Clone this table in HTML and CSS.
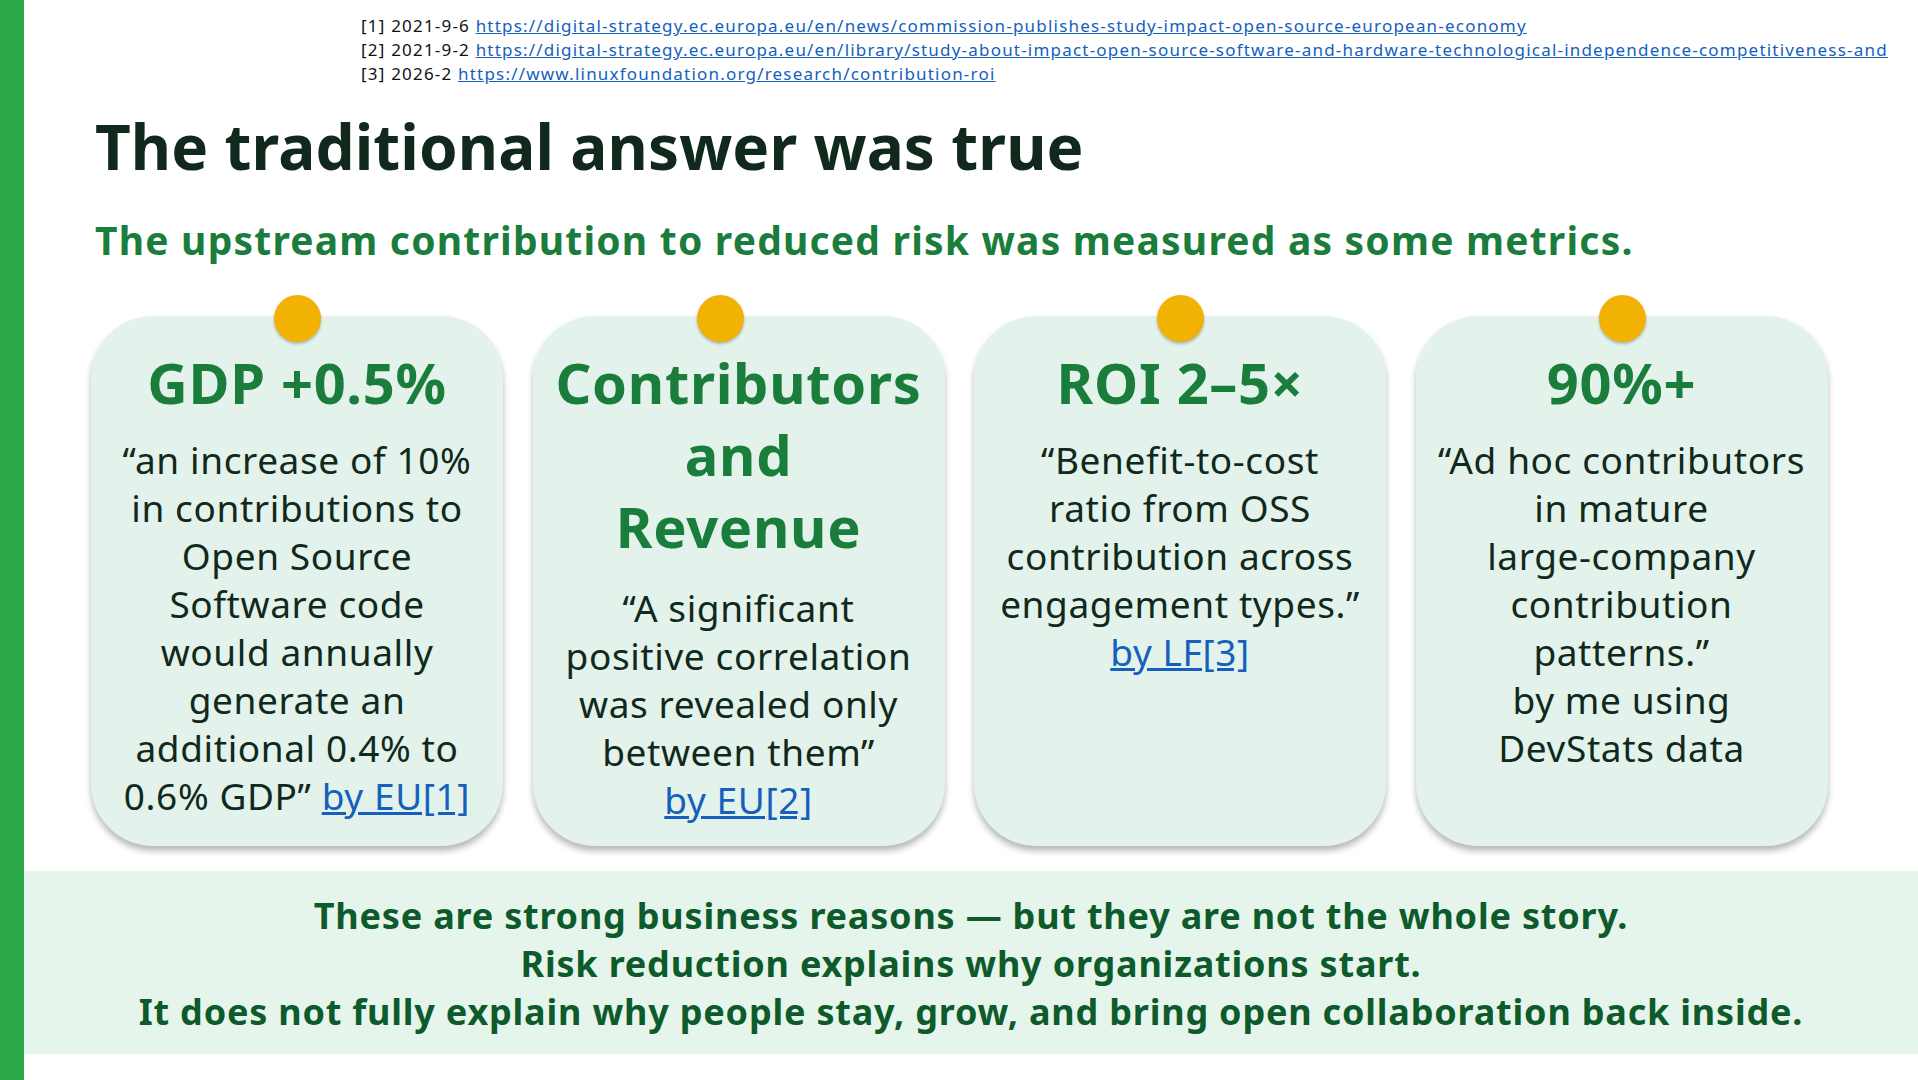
FILE: index.html
```html
<!DOCTYPE html>
<html lang="en">
<head>
<meta charset="utf-8">
<title>The traditional answer was true</title>
<link rel="stylesheet" href="styles.css">
</head>
<body>
<div class="page">
  <div class="bar"></div>
  <main class="main">
    <div class="refs">
      <div>[1] 2021-9-6 <a href="#">https://digital-strategy.ec.europa.eu/en/news/commission-publishes-study-impact-open-source-european-economy</a></div>
      <div>[2] 2021-9-2 <a href="#">https://digital-strategy.ec.europa.eu/en/library/study-about-impact-open-source-software-and-hardware-technological-independence-competitiveness-and</a></div>
      <div>[3] 2026-2 <a href="#">https://www.linuxfoundation.org/research/contribution-roi</a></div>
    </div>
    <h1 class="title">The traditional answer was true</h1>
    <h2 class="subtitle">The upstream contribution to reduced risk was measured as some metrics.</h2>
    <section class="cards">
      <div class="card">
        <span class="pin"></span>
        <h3 class="card-head">GDP +0.5%</h3>
        <p class="card-body">“an increase of 10%<br>in contributions to<br>Open Source<br>Software code<br>would annually<br>generate an<br>additional 0.4% to<br>0.6% GDP” <a href="#">by EU[1]</a></p>
      </div>
      <div class="card">
        <span class="pin pin-left"></span>
        <h3 class="card-head">Contributors<br>and<br>Revenue</h3>
        <p class="card-body tall">“A significant<br>positive correlation<br>was revealed only<br>between them”<br><a href="#">by EU[2]</a></p>
      </div>
      <div class="card">
        <span class="pin"></span>
        <h3 class="card-head">ROI 2–5×</h3>
        <p class="card-body">“Benefit-to-cost<br>ratio from OSS<br>contribution across<br>engagement types.”<br><a href="#">by LF[3]</a></p>
      </div>
      <div class="card">
        <span class="pin"></span>
        <h3 class="card-head">90%+</h3>
        <p class="card-body">“Ad hoc contributors<br>in mature<br>large-company<br>contribution<br>patterns.”<br>by me using<br>DevStats data</p>
      </div>
    </section>
    <section class="band">
      <p>These are strong business reasons — but they are not the whole story.</p>
      <p>Risk reduction explains why organizations start.</p>
      <p>It does not fully explain why people stay, grow, and bring open collaboration back inside.</p>
    </section>
  </main>
</div>
</body>
</html>
```
FILE: styles.css
```css
html, body {
  margin: 0;
  padding: 0;
  background: #ffffff;
}
body {
  font-family: "Noto Sans", "DejaVu Sans", sans-serif;
  color: #10291c;
}
.page {
  display: flex;
  width: 1918px;
  height: 1080px;
  overflow: hidden;
}
.bar {
  width: 24px;
  flex: 0 0 24px;
  background: #2ba84a;
}
.main {
  flex: 1;
  display: flex;
  flex-direction: column;
}
.refs {
  padding: 14px 0 0 337px;
  font-size: 17px;
  line-height: 24px;
  letter-spacing: 1.2px;
  color: #111;
  white-space: nowrap;
}
.refs a {
  color: #1560bd;
}
.title {
  margin: 20px 0 0 71px;
  font-size: 62px;
  line-height: 80px;
  font-weight: 700;
  letter-spacing: 0.1px;
  color: #10291c;
}
.subtitle {
  margin: 30px 0 0 71px;
  font-size: 39px;
  line-height: 48px;
  font-weight: 700;
  letter-spacing: 1.2px;
  color: #1b7d3c;
}
.cards {
  margin: 52px 0 0 67px;
  display: grid;
  grid-template-columns: repeat(4, 412px);
  column-gap: 29.5px;
}
.card {
  position: relative;
  height: 530px;
  box-sizing: border-box;
  padding-top: 30px;
  background: #e3f2ea;
  border-radius: 62px;
  box-shadow: 0 5px 6px rgba(0, 0, 0, 0.28);
  text-align: center;
}
.pin {
  position: absolute;
  top: -21px;
  left: 50%;
  width: 47px;
  height: 47px;
  margin-left: -23px;
  border-radius: 50%;
  background: #f2b203;
  box-shadow: 0 2px 3px rgba(0, 0, 0, 0.25);
}
.pin-left {
  margin-left: -42px;
}
.card-head {
  margin: 0;
  font-size: 56px;
  line-height: 72px;
  font-weight: 700;
  letter-spacing: 0.7px;
  color: #1a7d3c;
}
.card-body {
  margin: 18px 0 0;
  font-size: 37px;
  line-height: 48px;
  letter-spacing: 0.6px;
  color: #10291c;
}
.card-body.tall {
  margin-top: 22px;
}
.card-body a {
  color: #1560bd;
}
.band {
  margin-top: 25px;
  height: 183px;
  box-sizing: border-box;
  padding-top: 21px;
  background: #e6f5ec;
  text-align: center;
}
.band p {
  margin: 0;
  font-size: 36px;
  line-height: 48px;
  font-weight: 700;
  letter-spacing: 0.8px;
  color: #0d5a2a;
}
```
